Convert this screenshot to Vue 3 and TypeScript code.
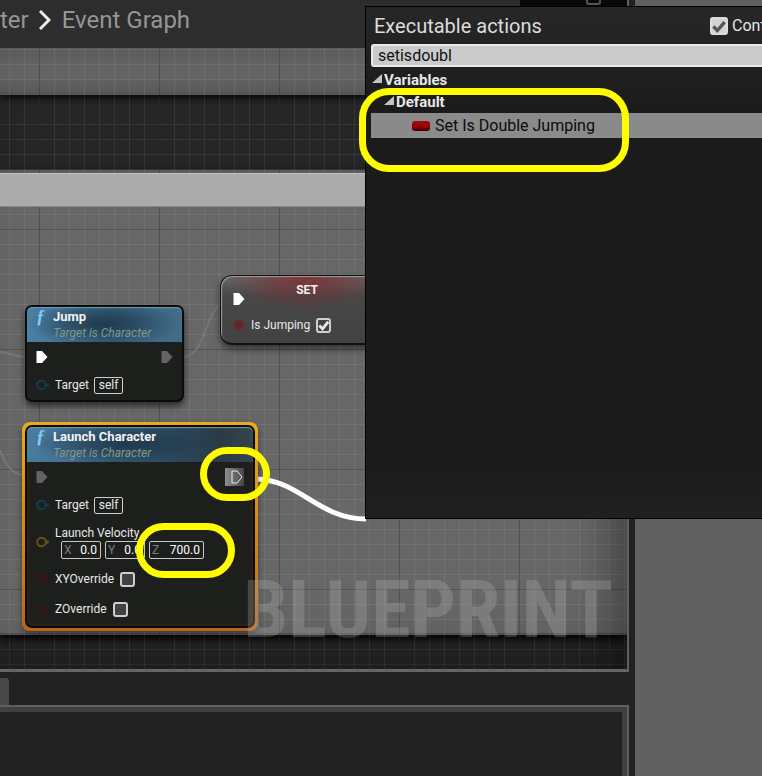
<script setup lang="ts">
import { ref } from 'vue'

interface Axis {
  name: string
  value: string
}

const query = ref('setisdoubl')
const contextSensitive = ref(true)
const isJumping = ref(true)
const velocity = ref<Axis[]>([
  { name: 'X', value: '0.0' },
  { name: 'Y', value: '0.0' },
  { name: 'Z', value: '700.0' },
])
const overrides = ref([
  { id: 'xy-override', label: 'XYOverride', on: false },
  { id: 'z-override', label: 'ZOverride', on: false },
])
</script>

<template>
  <main class="editor">
    <div class="workspace">
      <section class="graph" aria-label="Event Graph">
        <div class="comment comment-top"></div>
        <div class="comment comment-main"></div>
        <div class="grid-lines"></div>
        <div class="comment-title"></div>

        <nav class="breadcrumb">
          <a href="#">ter</a>
          <svg class="chevron" viewBox="0 0 12 20" aria-hidden="true"><path d="M1 1 L10 10 L1 19" /></svg>
          <a href="#" class="current">Event Graph</a>
        </nav>
        <div class="corner-tools"><span class="corner-box"></span></div>

        <svg class="wires" aria-hidden="true">
          <path class="faint" d="M0 352 C10 353 16 357 26 357" />
          <path class="faint" d="M0 450 C6 466 12 474 24 475" />
          <path class="faint" d="M182 357 C210 357 202 299 234 299" />
          <path class="live" d="M256 479 C300 480 318 519 366 519" />
        </svg>

        <article class="node jump">
          <header class="node-head">
            <span class="fn">ƒ</span>
            <div><h2>Jump</h2><p>Target is Character</p></div>
          </header>
          <div class="row exec">
            <svg class="pin" viewBox="0 0 12 14"><path class="solid" d="M.5 1H6L11.500 7L6 13H.5Z" /></svg>
            <svg class="pin end" viewBox="0 0 12 14"><path class="dim" d="M.5 1H6L11.500 7L6 13H.5Z" /></svg>
          </div>
          <div class="row target">
            <svg class="pin object" viewBox="0 0 14 12"><circle cx="5.500" cy="6" r="4.300" /><path d="M10.500 3.500L13.500 6L10.500 8.500Z" /></svg>
            <span>Target</span><button type="button">self</button>
          </div>
        </article>

        <article class="node setter">
          <h2>SET</h2>
          <svg class="pin" viewBox="0 0 12 14"><path class="solid" d="M.5 1H6L11.500 7L6 13H.5Z" /></svg>
          <div class="row setter-row">
            <svg class="pin bool filled" viewBox="0 0 14 12"><circle cx="5.500" cy="6" r="4.300" /><path d="M10.500 3.500L13.500 6L10.500 8.500Z" /></svg>
            <label for="is-jumping">Is Jumping</label>
            <span class="check"><input id="is-jumping" v-model="isJumping" type="checkbox" /><svg v-if="isJumping" viewBox="0 0 16 16"><path d="M3.500 8L7 11.500L13 4" /></svg></span>
          </div>
        </article>

        <article class="selection">
          <div class="node launch">
            <header class="node-head">
              <span class="fn">ƒ</span>
              <div><h2>Launch Character</h2><p>Target is Character</p></div>
            </header>
            <div class="row exec">
              <svg class="pin" viewBox="0 0 12 14"><path class="dim" d="M.5 1H6L11.500 7L6 13H.5Z" /></svg>
              <span class="hot-pin"><svg class="pin" viewBox="0 0 12 14"><path d="M1 1H6L11 7L6 13H1Z" /></svg></span>
            </div>
            <div class="row target">
              <svg class="pin object" viewBox="0 0 14 12"><circle cx="5.500" cy="6" r="4.300" /><path d="M10.500 3.500L13.500 6L10.500 8.500Z" /></svg>
              <span>Target</span><button type="button">self</button>
            </div>
            <div class="row velocity">
              <svg class="pin vector" viewBox="0 0 14 12"><circle cx="5.500" cy="6" r="4.300" /><path d="M10.500 3.500L13.500 6L10.500 8.500Z" /></svg>
              <div>
                <span class="velocity-name">Launch Velocity</span>
                <div class="axes">
                  <label v-for="axis in velocity" :key="axis.name" :class="{ wide: axis.name === 'Z' }">
                    <span>{{ axis.name }}</span><input v-model="axis.value" type="text" />
                  </label>
                </div>
              </div>
            </div>
            <div v-for="item in overrides" :key="item.id" class="row override">
              <svg class="pin bool" viewBox="0 0 14 12"><circle cx="5.500" cy="6" r="4.300" /><path d="M10.500 3.500L13.500 6L10.500 8.500Z" /></svg>
              <label :for="item.id">{{ item.label }}</label>
              <span class="check"><input :id="item.id" v-model="item.on" type="checkbox" /><svg v-if="item.on" viewBox="0 0 16 16"><path d="M3.500 8L7 11.500L13 4" /></svg></span>
            </div>
          </div>
        </article>

        <div class="watermark">BLUEPRINT</div>
      </section>

      <div class="tab-strip"><span class="tab"></span></div>
      <section class="results"></section>
    </div>
    <aside class="details"></aside>

    <section class="menu">
      <header class="menu-head">
        <h1>Executable actions</h1>
        <label class="context"><span class="check bright"><input v-model="contextSensitive" type="checkbox" /><svg v-if="contextSensitive" viewBox="0 0 16 16"><path d="M3 8.500L6.500 12L13 4.500" /></svg></span><span>Context Sensitive</span></label>
      </header>
      <input v-model="query" class="search" type="text" aria-label="Search actions" />
      <div class="tree">
        <div class="branch"><svg viewBox="0 0 10 10"><path d="M10 0V9H0Z" /></svg>Variables</div>
        <div class="branch nested"><svg viewBox="0 0 10 10"><path d="M10 0V9H0Z" /></svg>Default</div>
        <button type="button" class="action"><span class="pill"></span>Set Is Double Jumping</button>
      </div>
    </section>

    <div class="mark mark-action"></div>
    <div class="mark mark-pin"></div>
    <div class="mark mark-z"></div>
  </main>
</template>

<style>
body {
  background: #222;
}
</style>

<style scoped>
* {
  box-sizing: border-box;
}
h1, h2, p {
  margin: 0;
}
.editor {
  position: relative;
  display: flex;
  min-height: 100vh;
  overflow: hidden;
  background: #222;
  color: #e8e8e8;
  font: 12px/16px Roboto, sans-serif;
}
.workspace {
  flex: 1;
  min-width: 0;
  display: flex;
  flex-direction: column;
  padding-right: 6px;
}
.details {
  flex: 0 0 127px;
  background: #606060;
}
.graph {
  position: relative;
  flex: 1;
  min-height: 672px;
  overflow: hidden;
  background: #262626;
  border-right: 2px solid #606060;
  border-bottom: 3px solid #666;
}
.grid-lines {
  position: absolute;
  inset: 0;
  background:
    linear-gradient(90deg, rgba(0, 0, 0, 0.28) 1px, transparent 1px) 39px 0 / 120px 120px,
    linear-gradient(rgba(0, 0, 0, 0.28) 1px, transparent 1px) 0 109px / 120px 120px,
    linear-gradient(90deg, rgba(255, 255, 255, 0.07) 1px, transparent 1px) 9px 0 / 15px 15px,
    linear-gradient(rgba(255, 255, 255, 0.07) 1px, transparent 1px) 0 4px / 15px 15px;
  box-shadow: inset -50px 0 40px -30px rgba(0, 0, 0, 0.3), inset 0 -50px 50px -30px rgba(0, 0, 0, 0.25);
}
.comment {
  position: absolute;
  left: 0;
  right: 0;
  background: #676767;
  border-bottom: 2px solid #505050;
  box-shadow: 0 2px 8px #000;
}
.comment-top {
  top: 0;
  height: 95px;
  background: linear-gradient(#5c5c5c 50%, #656565 80%, #595959);
}
.comment-main {
  top: 170px;
  height: 465px;
  border-top: 3px solid #5b5b5b;
  box-shadow: 0 4px 8px #000;
}
.comment-title {
  position: absolute;
  left: 0;
  right: 0;
  top: 173px;
  height: 34px;
  background: #ababab;
  border-top: 1px solid #c4c4c4;
  border-bottom: 1px solid #888;
}
.breadcrumb {
  position: relative;
  display: flex;
  align-items: center;
  height: 48px;
  padding-bottom: 8px;
  background: rgba(42, 42, 42, 0.94);
}
.breadcrumb a {
  color: #969696;
  font-size: 24px;
  line-height: 32px;
  text-decoration: none;
}
.chevron {
  width: 12px;
  height: 20px;
  margin: 0 11px 0 10px;
  fill: none;
  stroke: #eee;
  stroke-width: 3;
}
.corner-tools {
  position: absolute;
  top: 0;
  right: 0;
  width: 107px;
  height: 48px;
  background: #080808;
}
.corner-box {
  position: absolute;
  left: 66px;
  top: -9px;
  width: 15px;
  height: 14px;
  border: 2px solid #555;
  border-radius: 3px;
}
.wires {
  position: absolute;
  inset: 0;
  width: 100%;
  height: 100%;
  fill: none;
}
.faint {
  stroke: #777;
  stroke-width: 2;
}
.live {
  stroke: #fff;
  stroke-width: 5;
}
.node {
  border: 2px solid #0b0c0c;
  border-radius: 7px;
  background: #1d1f1d;
}
.jump {
  position: absolute;
  left: 25px;
  top: 305px;
  width: 159px;
  padding-bottom: 2px;
  box-shadow: 0 4px 7px rgba(0, 0, 0, 0.6);
}
.selection {
  position: absolute;
  left: 22px;
  top: 422px;
  width: 236px;
  padding: 3px;
  border-radius: 8px;
  background: linear-gradient(#eaa91c, #d98912 50%, #b9651c);
  box-shadow: 0 3px 6px rgba(0, 0, 0, 0.4);
}
.launch {
  padding-bottom: 2px;
  box-shadow: inset 0 0 5px #442a08;
}
.node-head {
  display: flex;
  gap: 5px;
  height: 35px;
  padding: 2px 0 0 9px;
  border-radius: 5px 5px 0 0;
  background:
    radial-gradient(ellipse 76px 22px at 76px 17px, #20394c, transparent),
    linear-gradient(90deg, #4c80a4, #34607f 55%, #446d89);
  box-shadow: inset 0 1px 1px #789bb0;
}
.launch .node-head {
  background:
    radial-gradient(ellipse 95px 22px at 100px 17px, #20384a, transparent),
    linear-gradient(90deg, #4b7da1, #2f5571 50%, #2a3b45 85%, #34454e);
}
.fn {
  width: 12px;
  color: #7dccf5;
  font: italic bold 18px/16px "Liberation Serif", serif;
}
h2 {
  font-size: 12px;
  line-height: 16px;
  font-weight: 700;
  color: #f2f2f2;
}
.node-head h2 {
  font-size: 13px;
}
.node-head p {
  color: #849686;
  font-style: italic;
}
.row {
  display: flex;
  align-items: center;
  height: 30px;
  padding-left: 9px;
}
.pin {
  display: block;
  flex: none;
  width: 12px;
  height: 14px;
  fill: none;
}
.solid {
  fill: #fff;
}
.dim {
  fill: #626362;
}
.exec {
  justify-content: space-between;
  padding-right: 9px;
}
.target {
  height: 26px;
}
.object, .vector, .bool {
  width: 14px;
  height: 12px;
  margin-right: 5px;
  stroke-width: 2;
}
.object circle { stroke: #123e50; }
.object path { fill: #123e50; }
.vector circle { stroke: #655319; }
.vector path { fill: #655319; }
.bool circle { stroke: #3d1014; }
.bool path { fill: #3d1014; }
.filled circle { fill: #542a2c; stroke: #6b2b2e; }
.filled path { fill: #76282c; }
button {
  font: inherit;
  color: inherit;
}
.target button {
  width: 29px;
  height: 17px;
  margin-left: 5px;
  padding: 0;
  border: 1px solid #d0d0d0;
  border-radius: 2px;
  background: transparent;
  line-height: 15px;
}
.hot-pin {
  display: grid;
  place-items: center end;
  width: 19px;
  height: 18px;
  padding-right: 1px;
  background: linear-gradient(90deg, #8e8e8e, #454645);
}
.hot-pin .pin {
  stroke: #eee;
}
.velocity {
  height: 46px;
  padding-top: 2px;
}
.velocity-name {
  display: block;
}
.axes {
  display: flex;
  gap: 4px;
  padding-left: 6px;
}
.axes label {
  display: flex;
  align-items: center;
  width: 40px;
  height: 18px;
  padding: 0 3px 0 2px;
  border: 1px solid #c8c8c8;
  border-radius: 2px;
  color: #7b7b7b;
}
.axes .wide {
  width: 55px;
}
.axes input {
  flex: 1;
  min-width: 0;
  width: 0;
  padding: 0;
  border: 0;
  background: transparent;
  color: #fff;
  font: 12px/16px Roboto, sans-serif;
  text-align: right;
}
.check {
  display: grid;
  width: 15px;
  height: 15px;
  margin-left: 6px;
}
.check input {
  grid-area: 1 / 1;
  width: 100%;
  height: 100%;
  margin: 0;
  appearance: none;
  border: 2px solid #cfcfcf;
  border-radius: 3px;
  background: #414241;
}
.check svg {
  grid-area: 1 / 1;
  fill: none;
  stroke: #e6e6e6;
  stroke-width: 3;
  pointer-events: none;
}
.setter {
  position: absolute;
  left: 220px;
  top: 275px;
  width: 174px;
  height: 70px;
  border: 1px solid #111;
  border-bottom-width: 2px;
  border-radius: 12px;
  padding: 6px 0 0 12px;
  background:
    radial-gradient(ellipse 80px 34px at 50% 0, rgba(135, 35, 40, 0.75), transparent),
    linear-gradient(#666, #484848 30%, #424242);
  box-shadow: inset 1px 1px 1px #a0a0a0, 0 4px 7px rgba(0, 0, 0, 0.5);
}
.setter h2 {
  height: 10px;
  margin-left: -12px;
  text-align: center;
}
.setter-row {
  height: 40px;
  margin-top: -1px;
  padding: 0;
}
.setter-row .pin {
  margin-right: 4px;
}
.watermark {
  position: absolute;
  right: 14px;
  bottom: 17px;
  color: rgba(190, 190, 190, 0.25);
  font: 700 80px/84px "Roboto Condensed", "Liberation Sans Narrow", Roboto, sans-serif;
}
.tab-strip {
  height: 33px;
  padding-top: 6px;
}
.tab {
  display: block;
  width: 9px;
  height: 27px;
  background: #484848;
  border-radius: 0 3px 0 0;
}
.results {
  height: 71px;
  border: 2px solid #606060;
  border-left: 0;
  border-bottom: 0;
  box-shadow: inset -5px 5px #404040;
}
.menu {
  position: absolute;
  left: 365px;
  right: 0;
  top: 6px;
  height: 513px;
  padding-left: 5px;
  overflow: hidden;
  border: 1px solid #000;
  border-right: 0;
  background: linear-gradient(#272727, #1b1b1b 100px, #1b1b1b 460px, #202020);
}
.menu-head {
  display: flex;
  align-items: center;
  justify-content: space-between;
  height: 37px;
  padding-left: 3px;
  overflow: hidden;
}
h1 {
  color: #ddd;
  font-size: 20px;
  line-height: 24px;
  font-weight: 400;
  white-space: nowrap;
}
.context {
  display: flex;
  flex: 0 0 52px;
  min-width: 0;
  align-items: center;
  gap: 4px;
  font-size: 16px;
  line-height: 24px;
  white-space: nowrap;
}
.bright {
  flex: none;
  width: 18px;
  height: 18px;
  margin: 0;
}
.bright input {
  border-color: #ddd;
  background: #d4d4d4;
}
.bright svg {
  stroke: #555;
}
.search {
  display: block;
  width: 100%;
  height: 23px;
  padding: 0 5px;
  border: 2px solid #eaeaea;
  border-right: 0;
  border-radius: 3px 0 0 3px;
  background: #cbcbcb;
  color: #111;
  font: 16px/19px Roboto, sans-serif;
}
.tree {
  padding-top: 2px;
}
.branch {
  display: flex;
  align-items: center;
  gap: 2px;
  height: 22px;
  padding-left: 1px;
  font-size: 15px;
  line-height: 22px;
  font-weight: 700;
}
.nested {
  padding-left: 13px;
}
.branch svg {
  width: 10px;
  height: 10px;
  margin-bottom: 3px;
  fill: #c3c3c3;
}
.action {
  display: flex;
  align-items: center;
  gap: 5px;
  width: 100%;
  height: 25px;
  padding: 0 0 0 41px;
  border: 0;
  background: #8a8a8a;
  color: #0b0b0b;
  font-size: 16px;
}
.pill {
  width: 18px;
  height: 10px;
  border-radius: 3px;
  border-bottom: 1px solid #300;
  background: linear-gradient(#8e1010, #a50000 50%, #500);
}
.mark {
  position: absolute;
  border: 7px solid #fffc00;
  pointer-events: none;
}
.mark-action {
  left: 359px;
  top: 88px;
  width: 270px;
  height: 84px;
  border-radius: 30px;
}
.mark-pin {
  left: 200px;
  top: 447px;
  width: 70px;
  height: 54px;
  border-radius: 27px;
}
.mark-z {
  left: 136px;
  top: 523px;
  width: 99px;
  height: 55px;
  border-radius: 28px;
}
</style>
